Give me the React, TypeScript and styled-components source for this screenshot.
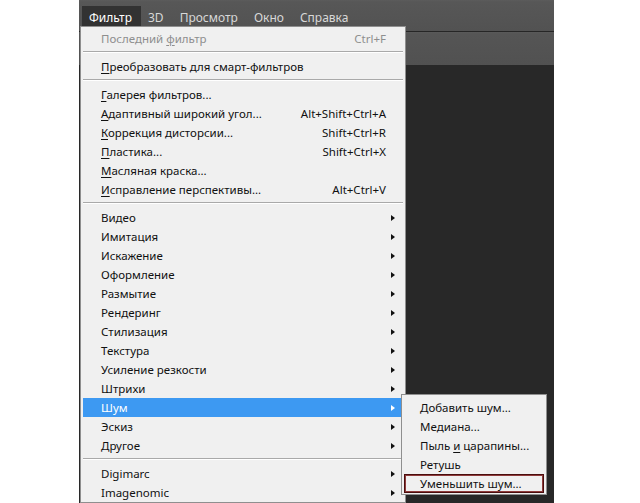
import React from "react";
import styled, { createGlobalStyle } from "styled-components";

const GlobalStyle = createGlobalStyle`
  html, body { margin: 0; padding: 0; background: #ffffff; }
  body { font-family: "Noto Sans", "Open Sans", "DejaVu Sans", sans-serif; }
`;

const Page = styled.div`
  display: flex;
  width: 640px;
  height: 503px;
  overflow: hidden;
  background: #ffffff;
`;

const Gutter = styled.div<{ $w: number }>`
  width: ${(p) => p.$w}px;
  flex: none;
  background: #ffffff;
`;

const AppWindow = styled.div`
  position: relative;
  width: 475px;
  flex: none;
  display: flex;
  flex-direction: column;
  background: #282828;
`;

const MenuBar = styled.div`
  height: 31px;
  flex: none;
  display: flex;
  align-items: flex-end;
  padding-left: 3px;
  background: linear-gradient(#5c5c5c 0px, #575757 2px, #525252 100%);
  border-bottom: 1px solid #262626;
`;

const MenuBarItem = styled.div<{ $active?: boolean }>`
  height: 25px;
  display: flex;
  align-items: center;
  padding: 0 9px 3px 7px;
  box-sizing: border-box;
  font-size: 12px;
  color: ${(p) => (p.$active ? "#ffffff" : "#d8d8d8")};
  background: ${(p) => (p.$active ? "#323232" : "transparent")};
`;

const OptionsBar = styled.div`
  height: 33px;
  flex: none;
  background: linear-gradient(#5a5a5a 0px, #555555 2px, #515151 100%);
`;

const Workspace = styled.div`
  flex: 1;
  background: #282828;
`;

const Dropdown = styled.div`
  position: absolute;
  top: 26px;
  left: 1px;
  width: 326px;
  box-sizing: border-box;
  background: #f0f0f0;
  border: 1px solid #8f8f8f;
  padding: 2px 2px 0;
`;

const Row = styled.div<{ $hot?: boolean; $disabled?: boolean }>`
  position: relative;
  display: grid;
  grid-template-columns: 1fr auto 17px;
  align-items: center;
  height: 19px;
  padding-left: 18px;
  font-size: 11.5px;
  color: ${(p) => (p.$hot ? "#ffffff" : p.$disabled ? "#8e8e8e" : "#111111")};
  background: ${(p) => (p.$hot ? "#3d99f2" : "transparent")};
  white-space: nowrap;
`;

const Label = styled.span``;

const Shortcut = styled.span`
  text-align: right;
`;

const Arrow = styled.span<{ $hot?: boolean }>`
  justify-self: start;
  margin-left: 5px;
  width: 0;
  height: 0;
  border-top: 3.5px solid transparent;
  border-bottom: 3.5px solid transparent;
  border-left: 4px solid ${(p) => (p.$hot ? "#ffffff" : "#111111")};
`;

const Separator = styled.div`
  height: 9px;
  display: flex;
  flex-direction: column;
  padding-top: 3px;
  box-sizing: border-box;
  &::before {
    content: "";
    height: 1px;
    background: #a9a9a9;
  }
  &::after {
    content: "";
    height: 1px;
    background: #ffffff;
  }
`;

const Mn = styled.span`
  text-decoration: underline;
  text-underline-offset: 2px;
  text-decoration-thickness: 1px;
`;

const Submenu = styled.div`
  position: absolute;
  top: -4px;
  left: calc(100% - 2px);
  width: 146px;
  box-sizing: border-box;
  background: #f0f0f0;
  border: 1px solid #8f8f8f;
  padding: 3px 2px 1px;
  z-index: 2;
`;

const SubItem = styled.div<{ $framed?: boolean }>`
  height: 19px;
  display: flex;
  align-items: center;
  padding-left: 16px;
  font-size: 11.5px;
  color: #111111;
  white-space: nowrap;
  box-shadow: ${(p) =>
    p.$framed ? "inset 0 0 0 1px #4a0d0d, inset 0 0 0 2px #8e3b3b" : "none"};
`;

type Item =
  | { kind: "sep" }
  | {
      kind: "item";
      label: React.ReactNode;
      shortcut?: string;
      sub?: boolean;
      disabled?: boolean;
      hot?: boolean;
    };

const items: Item[] = [
  { kind: "item", label: <>Последний <Mn>ф</Mn>ильтр</>, shortcut: "Ctrl+F", disabled: true },
  { kind: "sep" },
  { kind: "item", label: <><Mn>П</Mn>реобразовать для смарт-фильтров</> },
  { kind: "sep" },
  { kind: "item", label: <><Mn>Г</Mn>алерея фильтров...</> },
  { kind: "item", label: <><Mn>А</Mn>даптивный широкий угол...</>, shortcut: "Alt+Shift+Ctrl+A" },
  { kind: "item", label: <><Mn>К</Mn>оррекция дисторсии...</>, shortcut: "Shift+Ctrl+R" },
  { kind: "item", label: <><Mn>П</Mn>ластика...</>, shortcut: "Shift+Ctrl+X" },
  { kind: "item", label: <><Mn>М</Mn>асляная краска...</> },
  { kind: "item", label: <><Mn>И</Mn>справление перспективы...</>, shortcut: "Alt+Ctrl+V" },
  { kind: "sep" },
  { kind: "item", label: "Видео", sub: true },
  { kind: "item", label: "Имитация", sub: true },
  { kind: "item", label: "Искажение", sub: true },
  { kind: "item", label: "Оформление", sub: true },
  { kind: "item", label: "Размытие", sub: true },
  { kind: "item", label: "Рендеринг", sub: true },
  { kind: "item", label: "Стилизация", sub: true },
  { kind: "item", label: "Текстура", sub: true },
  { kind: "item", label: "Усиление резкости", sub: true },
  { kind: "item", label: "Штрихи", sub: true },
  { kind: "item", label: "Шум", sub: true, hot: true },
  { kind: "item", label: "Эскиз", sub: true },
  { kind: "item", label: "Другое", sub: true },
  { kind: "sep" },
  { kind: "item", label: "Digimarc", sub: true },
  { kind: "item", label: "Imagenomic", sub: true },
];

const noiseItems: { label: React.ReactNode; framed?: boolean }[] = [
  { label: "Добавить шум..." },
  { label: "Медиана..." },
  { label: <>Пыль <Mn>и</Mn> царапины...</> },
  { label: "Ретушь" },
  { label: "Уменьшить шум...", framed: true },
];

const menuBar = ["Фильтр", "3D", "Просмотр", "Окно", "Справка"];

export default function App() {
  return (
    <>
      <GlobalStyle />
      <Page>
        <Gutter $w={79} />
        <AppWindow>
          <MenuBar>
            {menuBar.map((m, i) => (
              <MenuBarItem key={m} $active={i === 0}>
                {m}
              </MenuBarItem>
            ))}
          </MenuBar>
          <OptionsBar />
          <Workspace />
          <Dropdown>
            {items.map((it, i) =>
              it.kind === "sep" ? (
                <Separator key={i} />
              ) : (
                <Row key={i} $hot={it.hot} $disabled={it.disabled}>
                  <Label>{it.label}</Label>
                  <Shortcut>{it.shortcut ?? ""}</Shortcut>
                  {it.sub ? <Arrow $hot={it.hot} /> : <span />}
                  {it.hot && (
                    <Submenu>
                      {noiseItems.map((s, j) => (
                        <SubItem key={j} $framed={s.framed}>
                          <Label>{s.label}</Label>
                        </SubItem>
                      ))}
                    </Submenu>
                  )}
                </Row>
              )
            )}
          </Dropdown>
        </AppWindow>
        <Gutter $w={86} />
      </Page>
    </>
  );
}
